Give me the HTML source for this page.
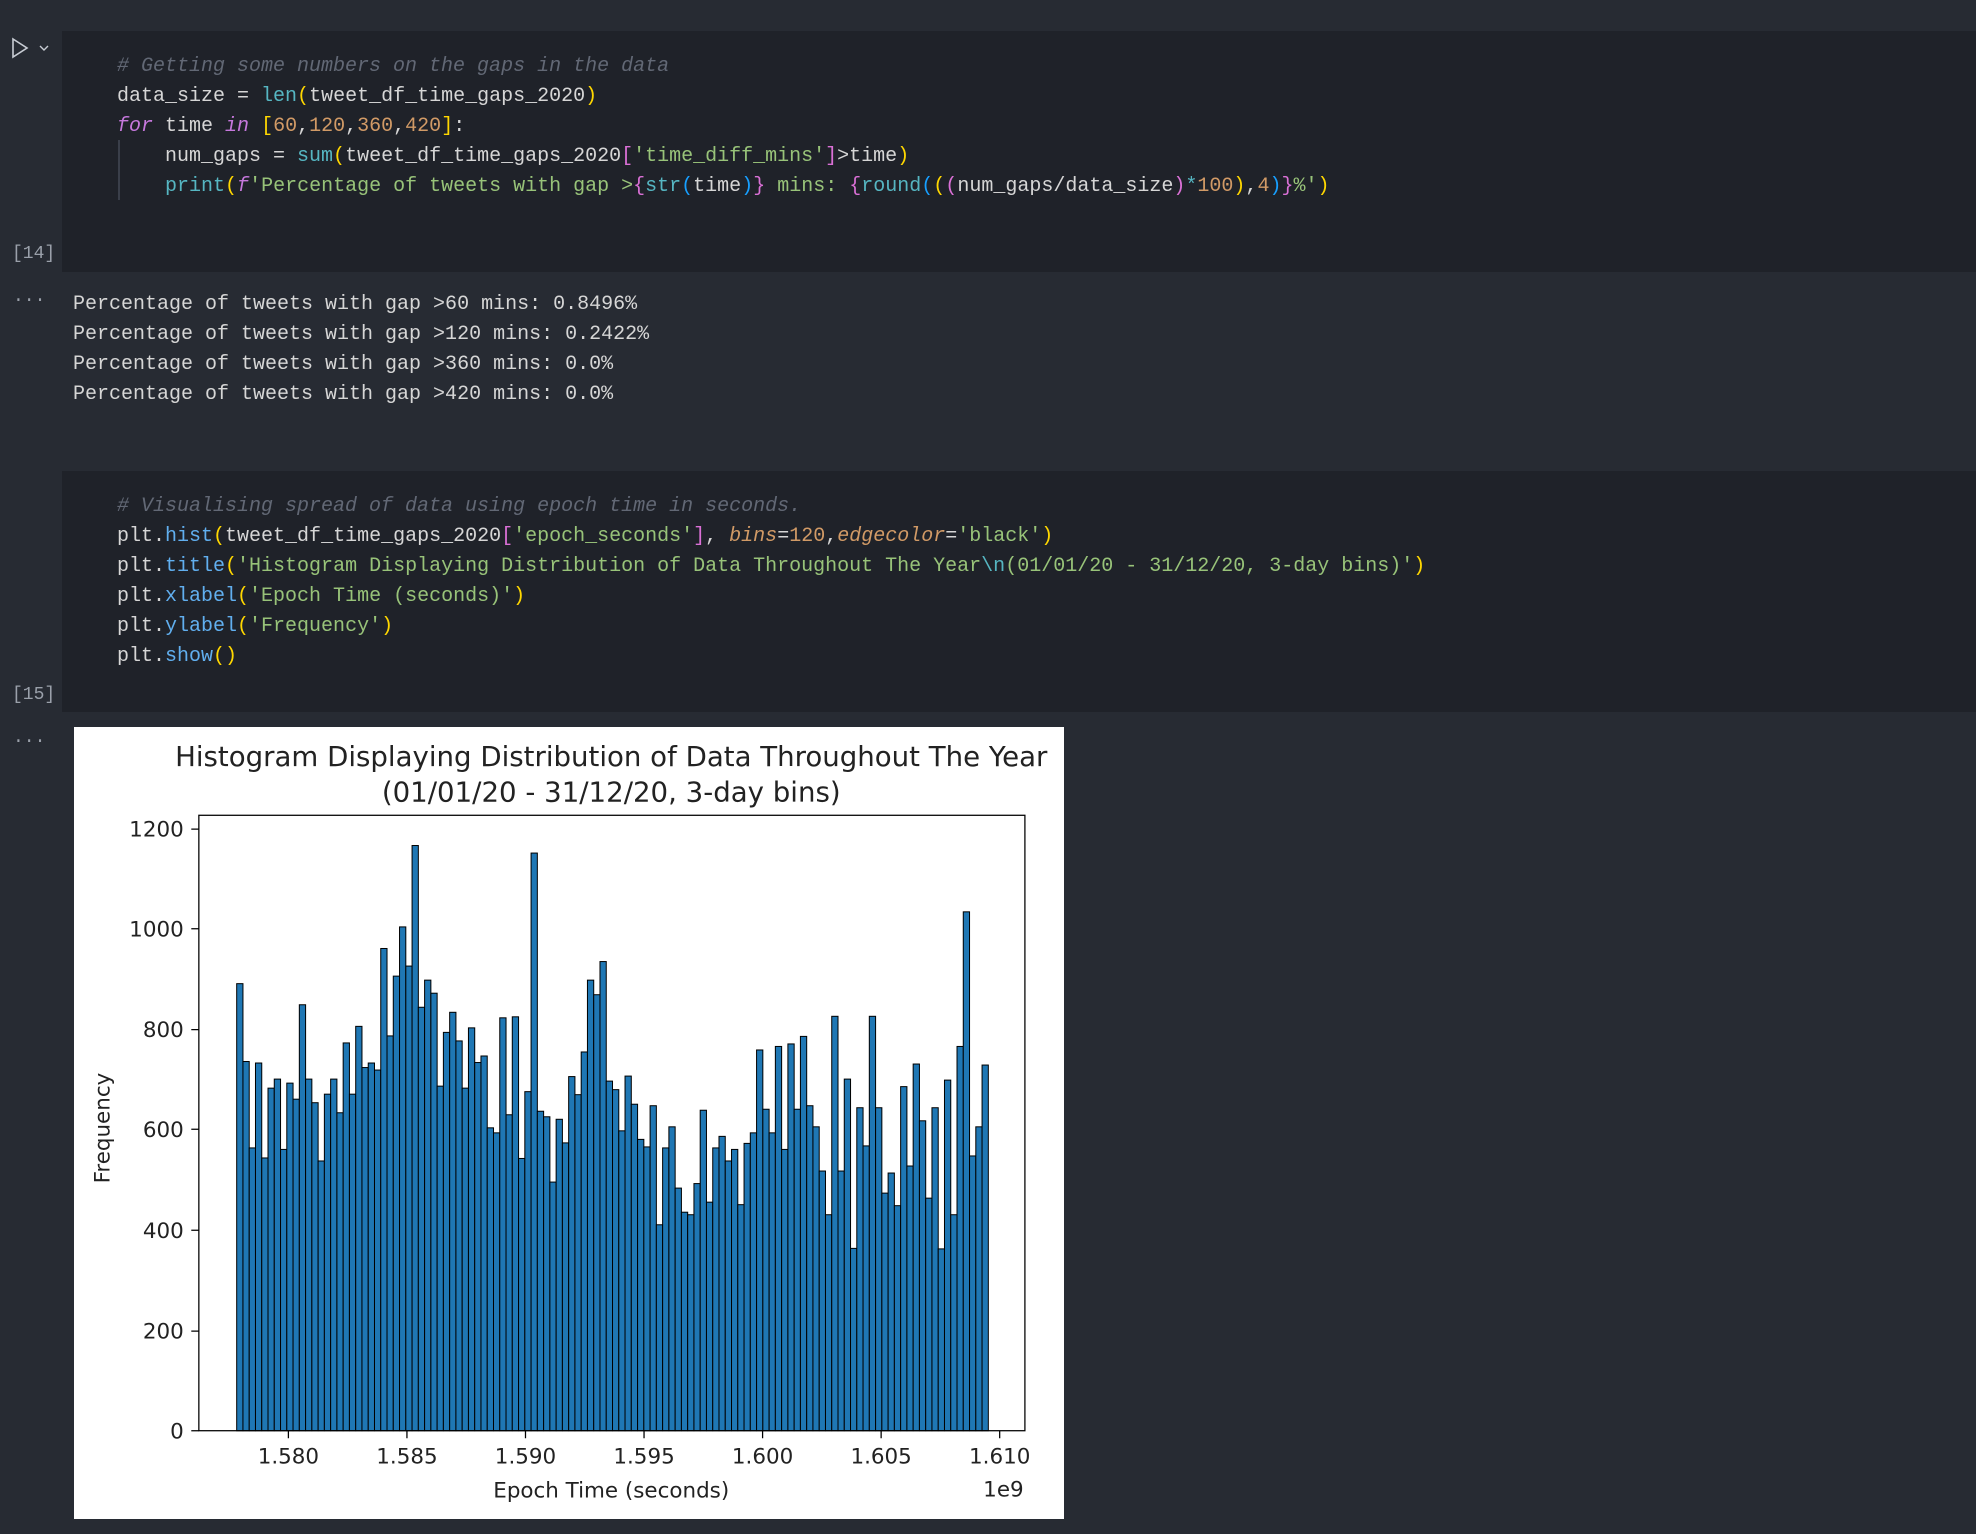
<!DOCTYPE html>
<html><head><meta charset="utf-8"><style>
html,body{margin:0;padding:0;width:1976px;height:1534px;background:#272b33;overflow:hidden;position:relative;font-family:"Liberation Mono",monospace}
.cell{position:absolute;left:62px;right:0;background:#1f2229}
.code{position:absolute;left:117px;font-size:20px;line-height:30px;color:#d6d6d6;white-space:pre}
.c{color:#626875;font-style:italic}.k{color:#c678dd;font-style:italic}.f{color:#56b6c2}.m{color:#61afef}.n{color:#d19a66}.s{color:#98c379}.y{color:#ffd700}.p{color:#da70d6}.b{color:#179fff}.a{color:#d19a66;font-style:italic}
.lbl{position:absolute;left:12px;font-size:18px;color:#9aa0aa}
.out{position:absolute;left:73px;font-size:20px;line-height:30px;color:#d6d6d6;white-space:pre}
</style></head><body>
<div class="cell" style="top:31px;height:241px"></div>
<div class="cell" style="top:471px;height:241px"></div>
<svg style="position:absolute;left:10px;top:37px" width="40" height="24"><path d="M3 2 L17 11 L3 20 Z" fill="none" stroke="#c8ccd4" stroke-width="1.6"/><path d="M30 9 L34 13 L38 9" fill="none" stroke="#c8ccd4" stroke-width="1.4"/></svg>
<div style="position:absolute;left:118px;top:140px;width:2px;height:60px;background:#3a3f4a"></div>
<div class="code" style="top:52px"><span class="c"># Getting some numbers on the gaps in the data</span>
data_size = <span class="f">len</span><span class="y">(</span>tweet_df_time_gaps_2020<span class="y">)</span>
<span class="k">for</span> time <span class="k">in</span> <span class="y">[</span><span class="n">60</span>,<span class="n">120</span>,<span class="n">360</span>,<span class="n">420</span><span class="y">]</span>:
    num_gaps = <span class="f">sum</span><span class="y">(</span>tweet_df_time_gaps_2020<span class="p">[</span><span class="s">'time_diff_mins'</span><span class="p">]</span>&gt;time<span class="y">)</span>
    <span class="f">print</span><span class="y">(</span><span class="k">f</span><span class="s">'Percentage of tweets with gap &gt;</span><span class="p">{</span><span class="f">str</span><span class="b">(</span>time<span class="b">)</span><span class="p">}</span><span class="s"> mins: </span><span class="p">{</span><span class="f">round</span><span class="b">(</span><span class="y">(</span><span class="p">(</span>num_gaps/data_size<span class="p">)</span><span class="f">*</span><span class="n">100</span><span class="y">)</span>,<span class="n">4</span><span class="b">)</span><span class="p">}</span><span class="s">%'</span><span class="y">)</span></div>
<div class="lbl" style="top:244px">[14]</div>
<div class="lbl" style="top:291px;left:13px">···</div>
<div class="out" style="top:290px">Percentage of tweets with gap &gt;60 mins: 0.8496%
Percentage of tweets with gap &gt;120 mins: 0.2422%
Percentage of tweets with gap &gt;360 mins: 0.0%
Percentage of tweets with gap &gt;420 mins: 0.0%</div>
<div class="code" style="top:492px"><span class="c"># Visualising spread of data using epoch time in seconds.</span>
plt.<span class="m">hist</span><span class="y">(</span>tweet_df_time_gaps_2020<span class="p">[</span><span class="s">'epoch_seconds'</span><span class="p">]</span>, <span class="a">bins</span>=<span class="n">120</span>,<span class="a">edgecolor</span>=<span class="s">'black'</span><span class="y">)</span>
plt.<span class="m">title</span><span class="y">(</span><span class="s">'Histogram Displaying Distribution of Data Throughout The Year</span><span class="f">\n</span><span class="s">(01/01/20 - 31/12/20, 3-day bins)'</span><span class="y">)</span>
plt.<span class="m">xlabel</span><span class="y">(</span><span class="s">'Epoch Time (seconds)'</span><span class="y">)</span>
plt.<span class="m">ylabel</span><span class="y">(</span><span class="s">'Frequency'</span><span class="y">)</span>
plt.<span class="m">show</span><span class="y">()</span></div>
<div class="lbl" style="top:685px">[15]</div>
<div class="lbl" style="top:732px;left:13px">···</div>
<svg id="ch" style="position:absolute;left:74px;top:727px" width="990" height="792" viewBox="59 577 785 628" font-family="DejaVu Sans, sans-serif">
<rect x="59" y="577" width="785" height="628" fill="#fff"/>
<g id="bars"></g>
<rect x="158" y="647" width="655" height="488" fill="none" stroke="#000" stroke-width="1"/>
<g font-size="17" fill="#222" text-anchor="end">
<text x="146" y="1141">0</text><text x="146" y="1062">200</text><text x="146" y="982">400</text><text x="146" y="902">600</text><text x="146" y="823">800</text><text x="146" y="743">1000</text><text x="146" y="664">1200</text></g>
<g stroke="#000"><path d="M152 1135h6M152 1056h6M152 976h6M152 896h6M152 817h6M152 737h6M152 658h6M229 1135v6M323 1135v6M417 1135v6M511 1135v6M605 1135v6M699 1135v6M793 1135v6"/></g>
<g font-size="17" fill="#222" text-anchor="middle">
<text x="229" y="1161">1.580</text><text x="323" y="1161">1.585</text><text x="417" y="1161">1.590</text><text x="511" y="1161">1.595</text><text x="605" y="1161">1.600</text><text x="699" y="1161">1.605</text><text x="793" y="1161">1.610</text>
<text x="485" y="1188">Epoch Time (seconds)</text>
<text x="485" y="608" font-size="21.9">Histogram Displaying Distribution of Data Throughout The Year</text>
<text x="485" y="636" font-size="21.9">(01/01/20 - 31/12/20, 3-day bins)</text>
<text x="90" y="895" transform="rotate(-90 90 895)" dy="-3">Frequency</text></g>
<text x="812" y="1187" font-size="17" fill="#222" text-anchor="end">1e9</text>
</svg>
<script>
var v=[890,735,563,732,543,682,700,560,692,660,848,700,653,537,670,700,633,772,670,805,723,732,718,960,786,905,1003,925,1165,843,897,871,686,793,833,776,682,802,733,746,603,593,822,629,824,542,675,1150,636,625,495,620,573,705,669,754,897,868,934,696,679,597,706,650,580,565,647,410,563,605,483,435,430,492,638,455,563,586,537,560,450,572,593,758,640,593,765,560,770,640,785,647,605,517,430,825,517,700,363,643,567,825,643,473,513,448,685,527,730,617,463,643,362,698,430,765,1033,547,605,728];
var s='',w=596/120;
for(var i=0;i<120;i++){var h=v[i]*0.3983;s+='<rect x="'+(188+i*w).toFixed(2)+'" y="'+(1135-h).toFixed(2)+'" width="'+w.toFixed(2)+'" height="'+h.toFixed(2)+'" fill="#1f77b4" stroke="#000" stroke-width="0.8"/>';}
document.getElementById('bars').innerHTML=s;
</script>
</body></html>
